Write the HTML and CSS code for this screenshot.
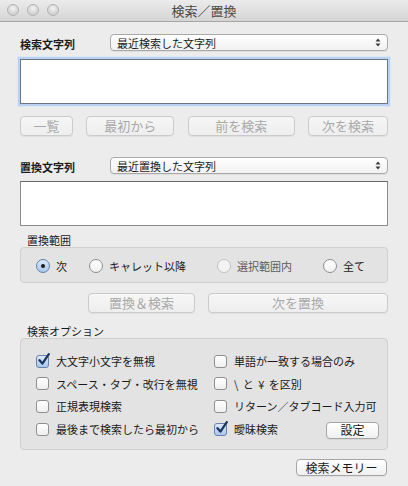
FILE: index.html
```html
<!DOCTYPE html>
<html lang="ja">
<head>
<meta charset="utf-8">
<title>検索／置換</title>
<link rel="stylesheet" href="styles.css">
</head>
<body>
<div class="window">
  <div class="titlebar">
    <div class="lights"><span class="light"></span><span class="light"></span><span class="light"></span></div>
    <div class="title">検索／置換</div>
  </div>
  <div class="content">
    <div class="field-row first">
      <div class="field-label">検索文字列</div>
      <div class="popup">
        <span>最近検索した文字列</span>
        <svg class="arrows" width="6" height="9" viewBox="0 0 6 9"><path d="M3 0.5 L5.5 3.5 H0.5 Z M3 8.5 L5.5 5.5 H0.5 Z" fill="#3a3a3a"/></svg>
      </div>
    </div>
    <div class="textbox focused"></div>
    <div class="btn-row four">
      <div class="btn disabled w53">一覧</div>
      <div class="btn disabled w88">最初から</div>
      <div class="btn disabled w107">前を検索</div>
      <div class="btn disabled w80">次を検索</div>
    </div>

    <div class="field-row second">
      <div class="field-label">置換文字列</div>
      <div class="popup">
        <span>最近置換した文字列</span>
        <svg class="arrows" width="6" height="9" viewBox="0 0 6 9"><path d="M3 0.5 L5.5 3.5 H0.5 Z M3 8.5 L5.5 5.5 H0.5 Z" fill="#3a3a3a"/></svg>
      </div>
    </div>
    <div class="textbox plain"></div>

    <div class="group-label range-label">置換範囲</div>
    <div class="group range">
      <label class="radio-item"><span class="radio on"><span class="dot"></span></span>次</label>
      <label class="radio-item"><span class="radio"></span>キャレット以降</label>
      <label class="radio-item dis"><span class="radio"></span>選択範囲内</label>
      <label class="radio-item"><span class="radio"></span>全て</label>
    </div>

    <div class="btn-row two">
      <div class="btn disabled w107">置換＆検索</div>
      <div class="btn disabled w180">次を置換</div>
    </div>

    <div class="group-label opt-label">検索オプション</div>
    <div class="group options">
      <div class="check-item"><span class="check on"><svg class="tick" width="14" height="14" viewBox="0 0 14 14"><path d="M2.5 7.2 L5.4 10.6 L11.8 1.2" fill="none" stroke="#1d3560" stroke-width="2.3" stroke-linecap="round" stroke-linejoin="round"/></svg></span>大文字小文字を無視</div>
      <div class="check-item"><span class="check"></span>単語が一致する場合のみ</div>
      <div class="check-item"><span class="check"></span>スペース・タブ・改行を無視</div>
      <div class="check-item"><span class="check"></span><span class="spaced">\ と ¥ を区別</span></div>
      <div class="check-item"><span class="check"></span>正規表現検索</div>
      <div class="check-item"><span class="check"></span>リターン／タブコード入力可</div>
      <div class="check-item"><span class="check"></span>最後まで検索したら最初から</div>
      <div class="check-item split">
        <span class="check-left"><span class="check on"><svg class="tick" width="14" height="14" viewBox="0 0 14 14"><path d="M2.5 7.2 L5.4 10.6 L11.8 1.2" fill="none" stroke="#1d3560" stroke-width="2.3" stroke-linecap="round" stroke-linejoin="round"/></svg></span>曖昧検索</span>
        <span class="btn small settings">設定</span>
      </div>
    </div>

    <div class="memory-row">
      <div class="btn small memory">検索メモリー</div>
    </div>
  </div>
</div>
</body>
</html>
```

FILE: styles.css
```css
* { box-sizing: border-box; }
html, body { margin: 0; padding: 0; }
body {
  width: 408px;
  height: 486px;
  overflow: hidden;
  background: #ececec;
  font-family: "Noto Sans CJK JP", "Noto Sans", sans-serif;
  color: #1a1a1a;
}
.window { width: 408px; height: 486px; background: #ececec; }

.titlebar {
  height: 22px;
  position: relative;
  background: linear-gradient(#ebebeb, #d5d5d5);
  border-bottom: 1px solid #a6a6a6;
  display: flex;
  align-items: center;
  justify-content: center;
}
.lights {
  position: absolute;
  left: 7px;
  top: 4px;
  display: flex;
  gap: 8px;
}
.light {
  width: 12px;
  height: 12px;
  border-radius: 50%;
  background: radial-gradient(circle at 50% 35%, #f2f2f2, #cfcfcf 75%);
  border: 1px solid #b3b3b3;
}
.title {
  font-size: 13px;
  line-height: 16px;
  color: #4a4a4a;
}

.content { padding: 0 20px; }

.field-row {
  display: flex;
  align-items: center;
  height: 17px;
}
.field-row.first { margin-top: 12px; }
.field-row.second { margin-top: 21px; }
.field-label {
  width: 90px;
  font-size: 11px;
  font-weight: bold;
  line-height: 14px;
  padding-top: 2px;
}
.popup {
  flex: 1;
  height: 17px;
  border: 1px solid #a9a9a9;
  border-radius: 4px;
  background: linear-gradient(#ffffff, #f1f1f1);
  box-shadow: 0 1px 0 rgba(0,0,0,0.06);
  display: flex;
  align-items: center;
  justify-content: space-between;
  padding: 0 6px 0 6px;
  font-size: 11px;
  line-height: 14px;
}
.arrows { display: block; }

.textbox {
  height: 45px;
  background: #fff;
  border: 1px solid #8e8e8e;
  border-top-color: #6f6f6f;
}
.textbox.focused {
  margin-top: 8px;
  border-color: #6b7584;
  box-shadow: 0 0 0 2px #b9d2f2, 0 0 0 3px #dbe7f6;
}
.textbox.plain {
  margin-top: 7px;
  border-color: #8a8a8a;
  border-top-color: #6a6a6a;
}

.btn-row { display: flex; height: 20px; }
.btn-row.four { margin-top: 12px; justify-content: space-between; }
.btn-row.two { margin-top: 10px; padding-left: 68px; gap: 13px; }

.btn {
  height: 20px;
  border: 1px solid #b4b4b4;
  border-radius: 4px;
  background: linear-gradient(#ffffff, #f0f0f0);
  box-shadow: 0 1px 0 rgba(0,0,0,0.05);
  display: flex;
  align-items: center;
  justify-content: center;
  font-size: 13px;
  line-height: 16px;
}
.btn.disabled {
  border-color: #cbcbcb;
  background: linear-gradient(#f6f6f6, #eeeeee);
  color: #a9a9a9;
}
.w53 { width: 53px; }
.w80 { width: 80px; }
.w88 { width: 88px; }
.w107 { width: 107px; }
.w180 { width: 180px; }

.group-label {
  font-size: 11px;
  line-height: 14px;
  height: 14px;
  padding-left: 7px;
}
.range-label { margin-top: 7px; }
.opt-label { margin-top: 11px; }

.group {
  background: #e3e3e3;
  border: 1px solid #d0d0d0;
  border-radius: 4px;
}
.range {
  height: 36px;
  display: grid;
  grid-template-columns: 53px 128px 106px auto;
  align-items: center;
  padding-left: 15px;
  padding-top: 1px;
}
.radio-item {
  display: flex;
  align-items: center;
  font-size: 11px;
  line-height: 14px;
  gap: 6px;
}
.radio-item.dis { color: #5c5c5c; }
.radio {
  width: 14px;
  height: 14px;
  border-radius: 50%;
  border: 1px solid #8f8f8f;
  background: linear-gradient(#ffffff, #f0f0f0);
  display: flex;
  align-items: center;
  justify-content: center;
  flex: none;
}
.radio-item.dis .radio { border-color: #c2c2c2; background: #f3f3f3; }
.radio.on {
  border-color: #5f7fae;
  background: linear-gradient(#dce9f9, #a8c6ec);
}
.dot { width: 4px; height: 4px; border-radius: 50%; background: #1a1a1a; }

.options {
  height: 112px;
  display: grid;
  grid-template-columns: 178px auto;
  grid-auto-rows: 22.6px;
  align-items: center;
  padding: 11px 8px 0 15px;
}
.check-item {
  display: flex;
  align-items: center;
  font-size: 11px;
  line-height: 14px;
  gap: 7px;
  white-space: nowrap;
}
.spaced { word-spacing: 2px; }
.check-item.split { justify-content: space-between; }
.check-left { display: flex; align-items: center; gap: 7px; }
.check {
  width: 13px;
  height: 13px;
  border: 1px solid #8f8f8f;
  border-radius: 3px;
  background: linear-gradient(#ffffff, #efefef);
  flex: none;
  position: relative;
}
.check.on {
  border-color: #6883ab;
  background: linear-gradient(#dce9f9, #a9c7ec);
}
.tick { position: absolute; left: 0px; top: -3px; }

.btn.small {
  height: 17px;
  font-size: 12px;
  line-height: 14px;
  border-color: #a6a6a6;
  color: #1a1a1a;
}
.settings { width: 53px; margin-top: 2px; }

.memory-row {
  display: flex;
  justify-content: flex-end;
  margin-top: 9px;
  padding-right: 1px;
}
.memory { width: 91px; }
```
